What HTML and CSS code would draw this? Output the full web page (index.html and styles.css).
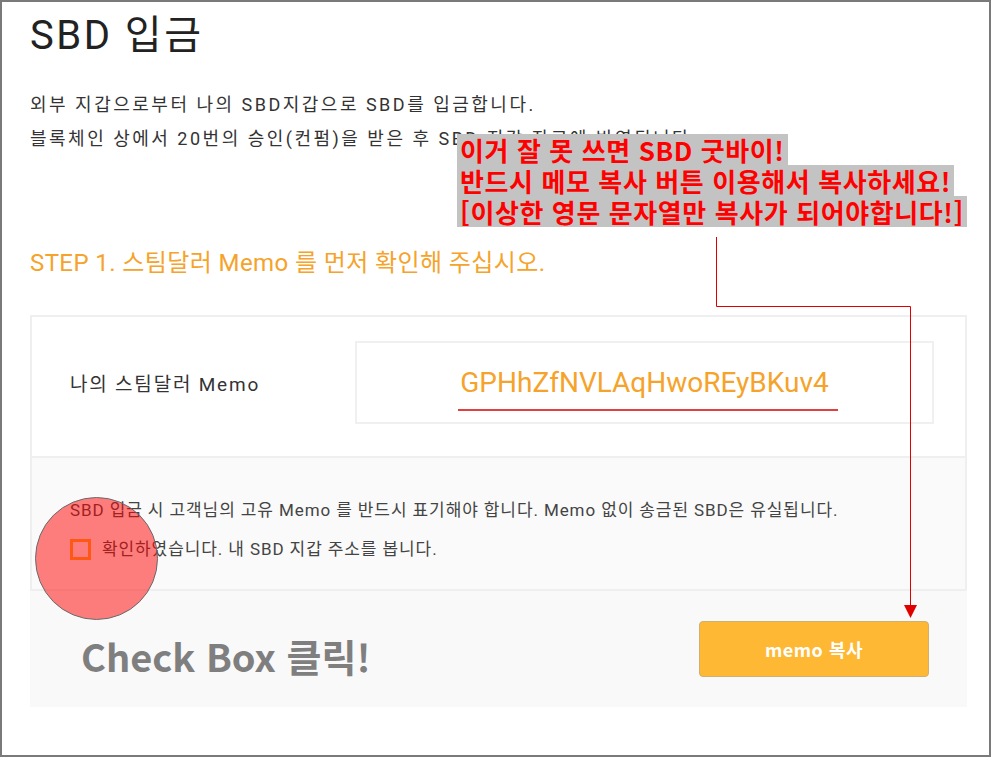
FILE: index.html
```html
<!DOCTYPE html>
<html lang="ko">
<head>
<meta charset="utf-8">
<title>SBD 입금</title>
<link rel="stylesheet" href="styles.css">
</head>
<body>
<div class="frame">
  <h1 class="title">SBD 입금</h1>
  <div class="intro">
    <p>외부 지갑으로부터 나의 SBD지갑으로 SBD를 입금합니다.</p>
    <p>블록체인 상에서 20번의 승인(컨펌)을 받은 후 SBD 지갑 잔고에 반영됩니다.</p>
  </div>
  <h2 class="step">STEP 1. 스팀달러 Memo 를 먼저 확인해 주십시오.</h2>
  <div class="card">
    <div class="memo-row">
      <div class="memo-label">나의 스팀달러 Memo</div>
      <div class="memo-box"><span class="memo-value">GPHhZfNVLAqHwoREyBKuv4</span></div>
    </div>
    <div class="notice">
      <p class="notice-text">SBD 입금 시 고객님의 고유 Memo 를 반드시 표기해야 합니다. Memo 없이 송금된 SBD은 유실됩니다.</p>
      <label class="check"><span class="box"></span><span>확인하였습니다. 내 SBD 지갑 주소를 봅니다.</span></label>
    </div>
  </div>
  <div class="actions">
    <div class="hint">Check Box 클릭!</div>
    <button class="copy-btn">memo 복사</button>
  </div>

  <div class="callout">
    <span class="cl">이거 잘 못 쓰면 SBD 굿바이!</span>
    <span class="cl">반드시 메모 복사 버튼 이용해서 복사하세요!</span>
    <span class="cl">[이상한 영문 문자열만 복사가 되어야합니다!]</span>
  </div>
  <svg class="arrow" width="991" height="757" viewBox="0 0 991 757">
    <polyline points="716.5,237 716.5,306.5 910.5,306.5 910.5,607" fill="none" stroke="#e00000" stroke-width="1"/>
    <polygon points="904,605 917,605 910.5,618" fill="#e00000"/>
    <line x1="458" y1="410" x2="838" y2="410" stroke="#d40000" stroke-width="1.5"/>
  </svg>
  <div class="spot"></div>
</div>
</body>
</html>
```

FILE: styles.css
```css
* { box-sizing: border-box; }
html, body { margin: 0; padding: 0; background: #fff; }
body {
  font-family: Roboto, "Noto Sans CJK KR", sans-serif;
  color: #333;
}
.frame {
  position: relative;
  width: 991px;
  height: 757px;
  border: 2px solid #7a7a7a;
  padding: 8px 22px 0 28px;
  overflow: hidden;
}
.title {
  margin: 0;
  font-size: 40px;
  font-weight: 400;
  line-height: 52px;
  letter-spacing: 2.5px;
  color: #222;
}
.intro { margin-top: 26px; }
.intro p {
  margin: 0;
  font-size: 18px;
  line-height: 34px;
  letter-spacing: 2.5px;
  color: #333;
}
.step {
  margin: 90px 0 0;
  font-size: 24px;
  font-weight: 400;
  line-height: 34px;
  letter-spacing: 0.4px;
  color: #f5a32a;
}
.card {
  margin-top: 35px;
  border: 2px solid #efefef;
  background: #fff;
}
.memo-row {
  display: flex;
  align-items: center;
  padding: 24px 31px 32px 38px;
}
.memo-label {
  width: 285px;
  font-size: 19px;
  letter-spacing: 1.8px;
  color: #333;
}
.memo-box {
  flex: 1;
  height: 83px;
  border: 2px solid #f0f0f0;
  display: flex;
  align-items: center;
  justify-content: center;
}
.memo-value {
  font-size: 28px;
  color: #f5a32a;
}
.notice {
  border-top: 2px solid #efefef;
  background: #fafafa;
  padding: 40px 38px 28px;
}
.notice-text {
  margin: 0;
  font-size: 17px;
  line-height: 24px;
  letter-spacing: 0.9px;
  color: #444;
}
.check {
  display: flex;
  align-items: center;
  margin-top: 15px;
  font-size: 17px;
  line-height: 24px;
  letter-spacing: 0.9px;
  color: #444;
}
.box {
  width: 21px;
  height: 21px;
  border: 3px solid #ffb12a;
  margin-right: 11px;
}
.actions {
  display: flex;
  align-items: center;
  justify-content: space-between;
  background: #f9f9f9;
  height: 116px;
  padding: 0 38px 0 51px;
}
.hint {
  font-family: "Noto Sans CJK KR", sans-serif;
  font-weight: 700;
  font-size: 38px;
  line-height: 50px;
  color: #7f7f7f;
  padding-top: 14px;
}
.copy-btn {
  width: 230px;
  height: 56px;
  border: 1px solid #cfb070;
  border-radius: 4px;
  background: #ffb833;
  color: #fff;
  font-family: "Noto Sans CJK KR", sans-serif;
  font-weight: 700;
  font-size: 18px;
  letter-spacing: 0.5px;
}
.callout {
  position: absolute;
  left: 455px;
  top: 132px;
  font-family: "Noto Sans CJK KR", sans-serif;
  font-weight: 700;
  font-size: 26px;
  color: #ff0000;
  letter-spacing: 0.6px;
}
.cl {
  display: block;
  width: max-content;
  line-height: 31px;
  background: #c3c3c3;
  padding: 0 3px;
}
.arrow {
  position: absolute;
  left: -2px;
  top: -2px;
  pointer-events: none;
}
.spot {
  position: absolute;
  left: 33px;
  top: 495px;
  width: 123px;
  height: 123px;
  border-radius: 50%;
  background: rgba(255, 0, 0, 0.5);
  border: 1px solid #6a6a6a;
}
```
